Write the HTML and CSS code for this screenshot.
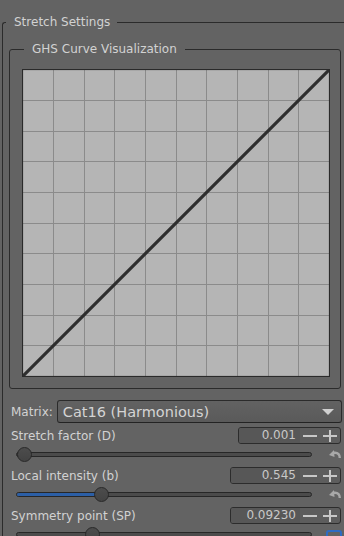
FILE: index.html
```html
<!DOCTYPE html>
<html lang="en">

<head>
    <meta charset="UTF-8">
    <meta name="viewport" content="width=device-width, initial-scale=1.0">
    <title>Stretch Settings</title>
    <link rel="stylesheet" href="styles.css">
</head>

<body>
    <fieldset class="group">
        <legend class="group-title">Stretch Settings</legend>

        <fieldset class="group group-inner">
            <legend class="group-title">GHS Curve Visualization</legend>
            <svg class="curve" width="308" height="308" viewBox="0 0 308 308">
                <rect x="0" y="0" width="308" height="308" fill="#b5b5b5" />
                <g stroke="#8b8b8b" stroke-width="1" shape-rendering="crispEdges">
                    <line x1="31.5" y1="0" x2="31.5" y2="308" />
                    <line x1="62.5" y1="0" x2="62.5" y2="308" />
                    <line x1="92.5" y1="0" x2="92.5" y2="308" />
                    <line x1="123.5" y1="0" x2="123.5" y2="308" />
                    <line x1="154.5" y1="0" x2="154.5" y2="308" />
                    <line x1="184.5" y1="0" x2="184.5" y2="308" />
                    <line x1="215.5" y1="0" x2="215.5" y2="308" />
                    <line x1="246.5" y1="0" x2="246.5" y2="308" />
                    <line x1="276.5" y1="0" x2="276.5" y2="308" />
                    <line y1="31.5" x1="0" y2="31.5" x2="308" />
                    <line y1="62.5" x1="0" y2="62.5" x2="308" />
                    <line y1="92.5" x1="0" y2="92.5" x2="308" />
                    <line y1="123.5" x1="0" y2="123.5" x2="308" />
                    <line y1="154.5" x1="0" y2="154.5" x2="308" />
                    <line y1="184.5" x1="0" y2="184.5" x2="308" />
                    <line y1="215.5" x1="0" y2="215.5" x2="308" />
                    <line y1="246.5" x1="0" y2="246.5" x2="308" />
                    <line y1="276.5" x1="0" y2="276.5" x2="308" />
                </g>
                <line x1="1" y1="307" x2="307" y2="1" stroke="#2e2e2e" stroke-width="3.2" />
                <rect x="0.5" y="0.5" width="307" height="307" fill="none" stroke="#2a2a2a" stroke-width="1.2" />
            </svg>
        </fieldset>

        <div class="controls">
            <div class="row-combo">
                <span class="label">Matrix:</span>
                <div class="combo">
                    <span>Cat16 (Harmonious)</span>
                    <span class="combo-arrow"></span>
                </div>
            </div>

            <div class="row-setting">
                <span class="label">Stretch factor (D)</span>
                <div class="spin spin-short">
                    <span class="spin-value">0.001</span>
                    <span class="spin-btn"><span class="minus"></span></span>
                    <span class="spin-btn"><span class="plus"></span></span>
                </div>
            </div>
            <div class="row-slider">
                <div class="slider">
                    <div class="slider-fill" style="width: 0px"></div>
                    <div class="slider-knob" style="left: 0px"></div>
                </div>
                <svg class="reset" width="12" height="8" viewBox="0 0 12 8">
                    <path d="M10.8 8 C10.8 4.5 9 2.8 6 2.8 L4.5 2.8" fill="none" stroke="#a8a8a8" stroke-width="2.4" />
                    <path d="M0 5 L5 0 L5.5 7 Z" fill="#a8a8a8" />
                </svg>
            </div>

            <div class="row-setting">
                <span class="label">Local intensity (b)</span>
                <div class="spin">
                    <span class="spin-value">0.545</span>
                    <span class="spin-btn"><span class="minus"></span></span>
                    <span class="spin-btn"><span class="plus"></span></span>
                </div>
            </div>
            <div class="row-slider">
                <div class="slider">
                    <div class="slider-fill" style="width: 80px"></div>
                    <div class="slider-knob" style="left: 77px"></div>
                </div>
                <svg class="reset" width="12" height="8" viewBox="0 0 12 8">
                    <path d="M10.8 8 C10.8 4.5 9 2.8 6 2.8 L4.5 2.8" fill="none" stroke="#a8a8a8" stroke-width="2.4" />
                    <path d="M0 5 L5 0 L5.5 7 Z" fill="#a8a8a8" />
                </svg>
            </div>

            <div class="row-setting">
                <span class="label">Symmetry point (SP)</span>
                <div class="spin">
                    <span class="spin-value">0.09230</span>
                    <span class="spin-btn"><span class="minus"></span></span>
                    <span class="spin-btn"><span class="plus"></span></span>
                </div>
            </div>
            <div class="row-slider">
                <div class="slider">
                    <div class="slider-fill" style="width: 0px"></div>
                    <div class="slider-knob" style="left: 68px"></div>
                </div>
                <span class="toggle"></span>
            </div>
        </div>
    </fieldset>
</body>

</html>
```

FILE: styles.css
```css
body {
  margin: 0px;
  width: 344px;
  height: 536px;
  overflow: hidden;
  background-color: #636363;
  color: #d2d2d2;
  font-family: 'DejaVu Sans', 'Liberation Sans', sans-serif;
  font-size: 12px;
}

.group {
  margin: 14px 0px 0px 2px;
  padding: 0px;
  width: 342px;
  box-sizing: border-box;
  min-width: 0;
  border: 1px solid #2b2b2b;
  border-right: none;
  border-radius: 3px 0px 0px 3px;
}

.group-title {
  margin-left: 3px;
  padding: 0px 7px 0px 8px;
  line-height: 17px;
}

.group-inner {
  margin: 10px 0px 0px 6px;
  padding: 11px 10px 11px 12px;
  width: 332px;
  border-right: 1px solid #2b2b2b;
  border-radius: 3px;
}

.group-inner .group-title {
  margin-left: 2px;
  padding: 0px 8px 0px 8px;
}

.curve {
  display: block;
}

/* settings below the graph */

.controls {
  margin: 11px 0px 0px 8px;
  width: 331px;
}

.label {
  white-space: nowrap;
}

.row-combo {
  display: flex;
  align-items: center;
  height: 23px;
}

.combo {
  flex: 1;
  margin-left: 4px;
  height: 23px;
  box-sizing: border-box;
  display: flex;
  align-items: center;
  justify-content: space-between;
  padding: 0px 7px 0px 5px;
  background: linear-gradient(#626262, #5a5a5a);
  border: 1px solid #2b2b2b;
  border-bottom-color: #232323;
  border-radius: 3px;
  color: #d4d4d4;
  font-size: 14.5px;
}

.combo-arrow {
  width: 0;
  height: 0;
  border-left: 6px solid transparent;
  border-right: 6px solid transparent;
  border-top: 6px solid #d0d0d0;
}

.row-setting {
  display: flex;
  align-items: center;
  justify-content: space-between;
  height: 17px;
  margin-top: 2px;
}

.row-combo + .row-setting {
  margin-top: 4px;
}

.spin {
  display: flex;
  width: 111px;
  height: 17px;
  box-sizing: border-box;
  margin-right: 1px;
  border: 1px solid #2c2c2c;
  border-radius: 3px;
  background-color: #5d5d5d;
  overflow: hidden;
}

.spin-short {
  width: 103px;
}

.spin-value {
  flex: 1;
  text-align: right;
  padding-right: 4px;
  line-height: 15px;
  background-color: #575757;
  color: #c8c8c8;
}

.spin-btn {
  width: 20px;
  display: flex;
  align-items: center;
  justify-content: center;
}

.minus {
  width: 14px;
  height: 2px;
  background-color: #c8c8c8;
}

.plus {
  position: relative;
  width: 14px;
  height: 12px;
}

.plus::before,
.plus::after {
  content: "";
  position: absolute;
  background-color: #c8c8c8;
}

.plus::before {
  left: 0;
  top: 5px;
  width: 14px;
  height: 2px;
}

.plus::after {
  left: 6px;
  top: 0;
  width: 2px;
  height: 12px;
}

.row-slider {
  display: flex;
  align-items: center;
  height: 21px;
}

.slider {
  position: relative;
  margin-left: 5px;
  width: 296px;
  height: 5px;
  box-sizing: border-box;
  border: 1px solid #272727;
  border-radius: 3px;
  background-color: #4b4b4b;
}

.slider-fill {
  height: 100%;
  border-radius: 2px;
  background-color: #2c5fa6;
}

.slider-knob {
  position: absolute;
  top: -6px;
  width: 15px;
  height: 15px;
  box-sizing: border-box;
  border: 1px solid #282828;
  border-radius: 50%;
  background: linear-gradient(#4c4c4c, #434343);
}

.reset {
  margin-left: 17px;
  margin-bottom: 2px;
}

.toggle {
  align-self: flex-start;
  margin: 6px 0px 0px 14px;
  width: 16px;
  height: 14px;
  box-sizing: border-box;
  border: 2px solid #2e6bc4;
  border-radius: 3px;
}
```
